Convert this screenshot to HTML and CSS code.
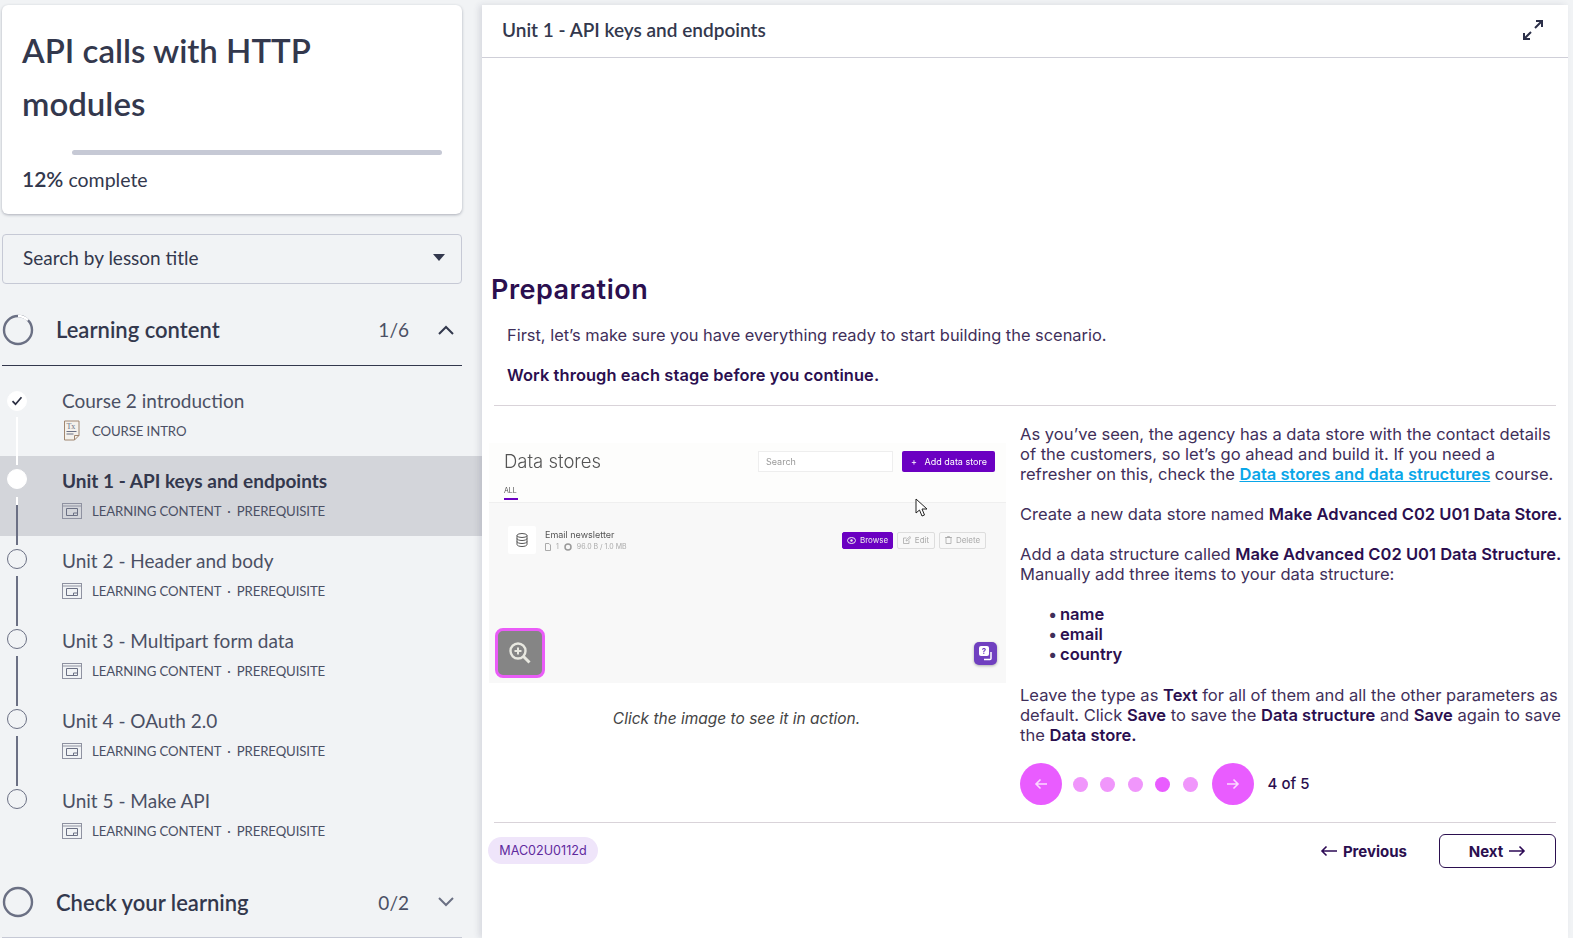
FILE: index.html
```html
<!DOCTYPE html>
<html lang="en">
<head>
    <meta charset="UTF-8">
    <meta name="viewport" content="width=device-width, initial-scale=1.0">
    <title>API calls with HTTP modules</title>
    <link rel="stylesheet" href="styles.css">
</head>
<body>
    <aside class="sidebar">
        <div class="course-card">
            <h1>API calls with HTTP modules</h1>
            <div class="progress-track"><div class="progress-done"></div><div class="progress-rest"></div></div>
            <p class="progress-text"><strong>12%</strong> complete</p>
        </div>
        <div class="lesson-search">
            <span>Search by lesson title</span>
            <span class="caret"></span>
        </div>

        <div class="section-head open">
            <svg class="section-ring" width="32" height="32" viewBox="0 0 32 32"><circle cx="16" cy="16" r="14" fill="none" stroke="#6b7084" stroke-width="2.4"/><path d="M16 2a14 14 0 0 1 10 4.2" fill="none" stroke="#fff" stroke-width="2.4"/></svg>
            <span class="section-title">Learning content</span>
            <span class="section-count">1/6</span>
            <svg class="chevron" width="18" height="12" viewBox="0 0 18 12"><path d="M2 10l7-7 7 7" fill="none" stroke="#33384d" stroke-width="2"/></svg>
        </div>

        <ul class="lessons">
            <li class="lesson done">
                <div class="marker">
                    <span class="dot"><svg width="12" height="10" viewBox="0 0 12 10"><path d="M1.5 5.2l3 3 6-7" fill="none" stroke="#2b2f42" stroke-width="1.7"/></svg></span>
                    <span class="line"></span>
                </div>
                <div class="lesson-body">
                    <div class="lesson-title">Course 2 introduction</div>
                    <div class="lesson-meta">
                        <svg class="intro-icon" width="16" height="21" viewBox="0 0 16 21"><path d="M.5 1h14.500v14.500l-4.500 4.500h-10z" fill="#f4f1ec" stroke="#a08670"/><path d="M10.500 20v-4.500h4.500" fill="none" stroke="#a08670"/><text x="2.500" y="9" class="intro-tx">Tx</text><path d="M2.500 11.500h10M2.500 14h7" stroke="#6b7084"/></svg>
                        <span>COURSE INTRO</span>
                    </div>
                </div>
            </li>
            <li class="lesson current">
                <div class="marker">
                    <span class="dot"></span>
                    <span class="line"></span>
                </div>
                <div class="lesson-body">
                    <div class="lesson-title">Unit 1 - API keys and endpoints</div>
                    <div class="lesson-meta">
                        <svg width="20" height="16" viewBox="0 0 20 16"><rect x=".5" y=".5" width="19" height="15" fill="none" stroke="#8f92a1"/><path d="M.5 3h19" stroke="#8f92a1"/><path d="M4.500 5.500h11v7h-11z" fill="none" stroke="#6b7084"/><path d="M11.500 12.500v-2.500h4" fill="none" stroke="#6b7084"/></svg>
                        <span>LEARNING CONTENT</span><span class="sep">·</span><span>PREREQUISITE</span>
                    </div>
                </div>
            </li>
            <li class="lesson">
                <div class="marker"><span class="dot"></span><span class="line"></span></div>
                <div class="lesson-body">
                    <div class="lesson-title">Unit 2 - Header and body</div>
                    <div class="lesson-meta">
                        <svg width="20" height="16" viewBox="0 0 20 16"><rect x=".5" y=".5" width="19" height="15" fill="none" stroke="#8f92a1"/><path d="M.5 3h19" stroke="#8f92a1"/><path d="M4.500 5.500h11v7h-11z" fill="none" stroke="#6b7084"/><path d="M11.500 12.500v-2.500h4" fill="none" stroke="#6b7084"/></svg>
                        <span>LEARNING CONTENT</span><span class="sep">·</span><span>PREREQUISITE</span>
                    </div>
                </div>
            </li>
            <li class="lesson">
                <div class="marker"><span class="dot"></span><span class="line"></span></div>
                <div class="lesson-body">
                    <div class="lesson-title">Unit 3 - Multipart form data</div>
                    <div class="lesson-meta">
                        <svg width="20" height="16" viewBox="0 0 20 16"><rect x=".5" y=".5" width="19" height="15" fill="none" stroke="#8f92a1"/><path d="M.5 3h19" stroke="#8f92a1"/><path d="M4.500 5.500h11v7h-11z" fill="none" stroke="#6b7084"/><path d="M11.500 12.500v-2.500h4" fill="none" stroke="#6b7084"/></svg>
                        <span>LEARNING CONTENT</span><span class="sep">·</span><span>PREREQUISITE</span>
                    </div>
                </div>
            </li>
            <li class="lesson">
                <div class="marker"><span class="dot"></span><span class="line"></span></div>
                <div class="lesson-body">
                    <div class="lesson-title">Unit 4 - OAuth 2.0</div>
                    <div class="lesson-meta">
                        <svg width="20" height="16" viewBox="0 0 20 16"><rect x=".5" y=".5" width="19" height="15" fill="none" stroke="#8f92a1"/><path d="M.5 3h19" stroke="#8f92a1"/><path d="M4.500 5.500h11v7h-11z" fill="none" stroke="#6b7084"/><path d="M11.500 12.500v-2.500h4" fill="none" stroke="#6b7084"/></svg>
                        <span>LEARNING CONTENT</span><span class="sep">·</span><span>PREREQUISITE</span>
                    </div>
                </div>
            </li>
            <li class="lesson">
                <div class="marker"><span class="dot"></span></div>
                <div class="lesson-body">
                    <div class="lesson-title">Unit 5 - Make API</div>
                    <div class="lesson-meta">
                        <svg width="20" height="16" viewBox="0 0 20 16"><rect x=".5" y=".5" width="19" height="15" fill="none" stroke="#8f92a1"/><path d="M.5 3h19" stroke="#8f92a1"/><path d="M4.500 5.500h11v7h-11z" fill="none" stroke="#6b7084"/><path d="M11.500 12.500v-2.500h4" fill="none" stroke="#6b7084"/></svg>
                        <span>LEARNING CONTENT</span><span class="sep">·</span><span>PREREQUISITE</span>
                    </div>
                </div>
            </li>
        </ul>

        <div class="section-head closed">
            <svg class="section-ring" width="32" height="32" viewBox="0 0 32 32"><circle cx="16" cy="16" r="14" fill="none" stroke="#6b7084" stroke-width="2.4"/></svg>
            <span class="section-title">Check your learning</span>
            <span class="section-count">0/2</span>
            <svg class="chevron" width="18" height="12" viewBox="0 0 18 12"><path d="M2 2l7 7 7-7" fill="none" stroke="#6b7084" stroke-width="2"/></svg>
        </div>
    </aside>

    <main class="lesson-panel">
        <header class="panel-head">
            <span>Unit 1 - API keys and endpoints</span>
            <svg width="22" height="22" viewBox="0 0 22 22"><path d="M13 9l7-7M14 2h6v6M9 13l-7 7M2 14v6h6" fill="none" stroke="#2b2f48" stroke-width="2"/></svg>
        </header>

        <div class="panel-body">
            <h2>Preparation</h2>
            <p class="intro">First, let’s make sure you have everything ready to start building the scenario.</p>
            <p class="intro"><strong>Work through each stage before you continue.</strong></p>

            <div class="columns">
                <div class="media">
                    <div class="shot">
                        <div class="shot-inner">
                            <div class="shot-top">
                                <div class="shot-bar">
                                    <span class="shot-title">Data stores</span>
                                    <span class="shot-search">Search</span>
                                    <span class="shot-add">+&nbsp;&nbsp;&nbsp;Add data store</span>
                                </div>
                                <div class="shot-tab">ALL</div>
                            </div>
                            <div class="shot-row">
                                <span class="shot-icon">
                                    <svg width="12" height="14" viewBox="0 0 12 14"><ellipse cx="6" cy="2.500" rx="5" ry="2" fill="none" stroke="#555"/><path d="M1 2.500v9c0 1.100 2.200 2 5 2s5-.9 5-2v-9M1 5.500c0 1.100 2.200 2 5 2s5-.9 5-2M1 8.500c0 1.100 2.200 2 5 2s5-.9 5-2" fill="none" stroke="#555"/></svg>
                                </span>
                                <div class="shot-info">
                                    <div class="shot-name">Email newsletter</div>
                                    <div class="shot-size">
                                        <svg width="6" height="8" viewBox="0 0 6 8"><path d="M.5.500h3.500l1.500 1.500v5.500h-5z" fill="none" stroke="#aaa"/></svg>
                                        <span>1</span>
                                        <svg width="8" height="8" viewBox="0 0 8 8"><circle cx="4" cy="4" r="3" fill="none" stroke="#999" stroke-width="1.500"/></svg>
                                        <span>96.0 B / 1.0 MB</span>
                                    </div>
                                </div>
                                <span class="shot-btn browse">
                                    <svg width="9" height="7" viewBox="0 0 9 7"><ellipse cx="4.500" cy="3.500" rx="4" ry="3" fill="none" stroke="#eee"/><circle cx="4.500" cy="3.500" r="1.200" fill="#eee"/></svg>
                                    Browse
                                </span>
                                <span class="shot-btn edit">
                                    <svg width="8" height="8" viewBox="0 0 8 8"><path d="M6 4.500v3h-5.500v-5.500h3M3 5l.5-1.500 3.500-3 1 1-3.500 3z" fill="none" stroke="#aaa" stroke-width=".8"/></svg>
                                    Edit
                                </span>
                                <span class="shot-btn delete">
                                    <svg width="7" height="8" viewBox="0 0 7 8"><path d="M1 1.500h5v6h-5zM0 1.500h7M2.500 1.500v-1h2v1" fill="none" stroke="#aaa" stroke-width=".8"/></svg>
                                    Delete
                                </span>
                            </div>
                            <span class="shot-help">
                                <span class="shot-help-mark">?</span>
                                <svg width="14" height="14" viewBox="0 0 14 14"><path d="M12 5v6.500a1 1 0 0 1-1 1H5" fill="none" stroke="#fff" stroke-width="1.500"/></svg>
                            </span>
                            <svg class="shot-cursor" width="14" height="20" viewBox="0 0 14 20"><path d="M1 1v14l3.500-3 2.500 6 2.500-1-2.500-6h5z" fill="#fff" stroke="#222"/></svg>
                        </div>
                        <span class="zoom-btn">
                            <svg width="26" height="26" viewBox="0 0 26 26"><circle cx="11" cy="11" r="7.500" fill="none" stroke="#e8e8e0" stroke-width="2.400"/><path d="M16.500 16.500l6 6" stroke="#e8e8e0" stroke-width="3"/><path d="M7.500 11h7M11 7.500v7" stroke="#e8e8e0" stroke-width="2"/></svg>
                        </span>
                    </div>
                    <p class="caption">Click the image to see it in action.</p>
                </div>

                <div class="steps">
                    <p>As you’ve seen, the agency has a data store with the contact details of the customers, so let’s go ahead and build it. If you need a refresher on this, check the <a href="#">Data stores and data structures</a> course.</p>
                    <p>Create a new data store named <strong>Make Advanced C02 U01 Data Store.</strong></p>
                    <p>Add a data structure called <strong>Make Advanced C02 U01 Data Structure.</strong> Manually add three items to your data structure:</p>
                    <ul>
                        <li><strong>name</strong></li>
                        <li><strong>email</strong></li>
                        <li><strong>country</strong></li>
                    </ul>
                    <p>Leave the type as <strong>Text</strong> for all of them and all the other parameters as default. Click <strong>Save</strong> to save the <strong>Data structure</strong> and <strong>Save</strong> again to save the <strong>Data store.</strong></p>
                    <div class="pager">
                        <span class="pager-arrow"><svg width="14" height="12" viewBox="0 0 14 12"><path d="M13 6H2M6.500 1.500L2 6l4.500 4.500" fill="none" stroke="#fbd9ff" stroke-width="1.600"/></svg></span>
                        <span class="pager-dot"></span>
                        <span class="pager-dot"></span>
                        <span class="pager-dot"></span>
                        <span class="pager-dot on"></span>
                        <span class="pager-dot"></span>
                        <span class="pager-arrow"><svg width="14" height="12" viewBox="0 0 14 12"><path d="M1 6h11M7.500 1.500L12 6l-4.500 4.500" fill="none" stroke="#fbd9ff" stroke-width="1.600"/></svg></span>
                        <span class="pager-text">4 of 5</span>
                    </div>
                </div>
            </div>

            <footer class="panel-foot">
                <span class="lesson-code">MAC02U0112d</span>
                <a class="prev" href="#">
                    <svg width="18" height="12" viewBox="0 0 18 12"><path d="M17 6H2M6.500 1.500L2 6l4.500 4.500" fill="none" stroke="#2d0a55" stroke-width="1.600"/></svg>
                    Previous
                </a>
                <a class="next" href="#">
                    Next
                    <svg width="18" height="12" viewBox="0 0 18 12"><path d="M1 6h15M11.500 1.500L16 6l-4.500 4.500" fill="none" stroke="#2d0a55" stroke-width="1.600"/></svg>
                </a>
            </footer>
        </div>
    </main>
</body>
</html>
```

FILE: styles.css
```css
* {
    box-sizing: border-box;
}
body {
    margin: 0;
    height: 100vh;
    overflow: hidden;
    display: flex;
    background: #f1f3f5;
    font-family: Lato, "Noto Sans", sans-serif;
    color: #33384d;
}

/* sidebar */
.sidebar {
    width: 482px;
    flex-shrink: 0;
    padding-top: 5px;
}
.course-card {
    width: 460px;
    height: 209px;
    margin-left: 2px;
    padding: 19px 20px 0;
    background: white;
    border-radius: 6px;
    box-shadow: 0 1px 3px rgba(40, 45, 70, 0.35);
}
.course-card h1 {
    max-width: 330px;
    margin: 0;
    font-size: 33px;
    line-height: 53px;
    font-weight: 600;
    color: #33384d;
}
.progress-track {
    display: flex;
    margin-top: 20px;
    height: 5px;
}
.progress-done {
    width: 50px;
    background: white;
}
.progress-rest {
    flex: 1;
    background: #c6c9d5;
    border-radius: 3px;
}
.progress-text {
    margin: 11px 0 0;
    font-size: 19.5px;
    line-height: 26px;
}
.progress-text strong {
    font-size: 21px;
    font-weight: 600;
    color: #33384d;
}
.lesson-search {
    display: flex;
    justify-content: space-between;
    align-items: center;
    width: 460px;
    height: 50px;
    margin: 20px 0 0 2px;
    padding: 0 16px 3px 20px;
    border: 1px solid #c6c9d5;
    border-radius: 4px;
    font-size: 19px;
}
.caret {
    border-left: 6px solid transparent;
    border-right: 6px solid transparent;
    border-top: 7px solid #33384d;
}
.section-head {
    display: flex;
    align-items: center;
    width: 460px;
    margin-left: 2px;
    font-size: 22px;
}
.section-head.open {
    height: 82px;
    padding-top: 10px;
    border-bottom: 1px solid #33384d;
}
.section-head.closed {
    height: 71px;
    margin-top: 11px;
    border-bottom: 1px solid #c6c9d5;
}
.section-title {
    flex: 1;
    margin-left: 22px;
    font-weight: 600;
}
.section-count {
    margin-right: 28px;
    color: #4b5064;
    font-size: 19px;
}
.chevron {
    margin-right: 7px;
}
.lessons {
    list-style: none;
    margin: 10px 0 0;
    padding: 0;
}
.lesson {
    display: flex;
    height: 80px;
    color: #4b5064;
}
.lesson.current {
    background: #d3d5da;
    color: #33384d;
}
.marker {
    width: 62px;
    flex-shrink: 0;
    padding: 13px 0 0 7px;
}
.done .marker {
    padding-top: 15px;
}
.dot {
    display: flex;
    align-items: center;
    justify-content: center;
    width: 20px;
    height: 20px;
    border: 1px solid #6b7084;
    border-radius: 50%;
}
.line {
    display: block;
    width: 2px;
    height: 50px;
    margin: 7px 0 0 9px;
    background: #6b7084;
}
.done .dot,
.current .dot {
    background: white;
    border-color: white;
}
.done .line {
    height: 48px;
    margin-top: 6px;
    background: white;
}
.current .line {
    height: 48px;
    margin-top: 8px;
    background: linear-gradient(to bottom, white 8px, #6b7084 8px);
}
.lesson-body {
    padding-top: 12px;
}
.lesson-title {
    font-size: 19px;
    line-height: 26px;
}
.current .lesson-title {
    font-weight: 700;
}
.lesson-meta {
    display: flex;
    align-items: center;
    gap: 10px;
    margin-top: 7px;
    font-size: 13.2px;
    letter-spacing: -0.1px;
    line-height: 20px;
    color: #4b5064;
}
.done .lesson-meta {
    margin-top: 6px;
}
.lesson-meta .sep {
    margin: 0 -4px;
}
.intro-icon {
    margin-left: 2px;
    margin-right: 2px;
}
.intro-tx {
    font-family: "Liberation Serif", serif;
    font-size: 8px;
    fill: #6b7084;
}

/* main panel */
.lesson-panel {
    width: 1086px;
    height: 933px;
    margin-top: 5px;
    background: white;
    box-shadow: -3px 0 6px rgba(40, 45, 70, 0.12);
    font-family: Inter, "Liberation Sans", sans-serif;
    color: #3f2f5a;
}
.panel-head {
    display: flex;
    align-items: center;
    justify-content: space-between;
    height: 53px;
    padding: 0 24px 3px 20px;
    border-bottom: 1px solid #cfcfd8;
    font-family: Lato, "Noto Sans", sans-serif;
    font-size: 19px;
    font-weight: 600;
    color: #33384d;
}
.panel-body {
    padding: 215px 0 0 9px;
}
.panel-body h2 {
    margin: 0;
    font-size: 27px;
    line-height: 34px;
    font-weight: 600;
    color: #2b0f4f;
    letter-spacing: 0.5px;
}
.intro {
    margin: 16px 0 0 16px;
    font-size: 16.4px;
    line-height: 24px;
}
.intro + .intro {
    margin-top: 16px;
}
.intro strong {
    letter-spacing: 0.1px;
}
strong {
    font-weight: 600;
    color: #2b0f4f;
}
.columns {
    display: flex;
    width: 1062px;
    margin: 18px 0 0 3px;
    border-top: 1px solid #d9d3d9;
    border-bottom: 1px solid #d9d3d9;
}
.media {
    flex-shrink: 0;
    width: 520px;
    margin-left: -5px;
    padding: 37px 25px 0 0;
}
.shot {
    position: relative;
    width: 517px;
    height: 240px;
}
.shot-inner {
    position: relative;
    height: 100%;
    background: #f8f8f8;
    color: #555;
    filter: blur(0.4px);
    overflow: hidden;
}
.shot-top {
    height: 60px;
    padding: 7px 11px 0 15px;
    background: #fdfdfc;
    border-bottom: 1px solid #efefef;
}
.shot-bar {
    display: flex;
    align-items: center;
}
.shot-title {
    width: 254px;
    font-size: 18.5px;
    font-weight: 300;
}
.shot-search {
    width: 135px;
    height: 21px;
    margin-right: 9px;
    padding-left: 7px;
    border: 1px solid #eee;
    background: white;
    font-size: 9px;
    line-height: 19px;
    color: #999;
}
.shot-add {
    width: 93px;
    height: 21px;
    padding-left: 9px;
    background: #6b00c2;
    color: white;
    font-size: 9px;
    line-height: 21px;
    white-space: nowrap;
    border-radius: 2px;
}
.shot-tab {
    width: 14px;
    margin-top: 14px;
    padding-bottom: 3px;
    border-bottom: 2px solid #6b00c2;
    font-size: 7px;
    line-height: 9px;
}
.shot-row {
    display: flex;
    align-items: center;
    gap: 4px;
    padding: 23px 20px 0 19px;
}
.shot-icon {
    display: flex;
    align-items: center;
    justify-content: center;
    width: 28px;
    height: 28px;
    margin-right: 5px;
    background: white;
    border-radius: 2px;
}
.shot-info {
    flex: 1;
}
.shot-name {
    font-size: 9px;
    line-height: 13px;
}
.shot-size {
    display: flex;
    align-items: center;
    gap: 5px;
    font-size: 7px;
    line-height: 11px;
    color: #aaa;
}
.shot-btn {
    display: flex;
    align-items: center;
    justify-content: center;
    gap: 4px;
    height: 17px;
    border: 1px solid #ddd;
    border-radius: 2px;
    font-size: 8px;
    color: #aaa;
}
.shot-btn.browse {
    width: 51px;
    background: #6b00c2;
    border-color: #6b00c2;
    color: #eee;
}
.shot-btn.edit {
    width: 38px;
}
.shot-btn.delete {
    width: 47px;
}
.shot-help {
    position: absolute;
    right: 9px;
    bottom: 18px;
    display: flex;
    align-items: center;
    justify-content: center;
    width: 23px;
    height: 23px;
    background: #7040c0;
    border-radius: 5px;
    box-shadow: 0 1px 3px rgba(0, 0, 0, 0.3);
}
.shot-help-mark {
    position: absolute;
    left: 5px;
    top: 4px;
    width: 10px;
    height: 10px;
    background: white;
    border-radius: 2px;
    color: #7040c0;
    font-size: 8px;
    font-weight: 700;
    line-height: 10px;
    text-align: center;
}
.shot-cursor {
    position: absolute;
    left: 426px;
    top: 55px;
}
.zoom-btn {
    position: absolute;
    left: 6px;
    top: 185px;
    display: flex;
    align-items: center;
    justify-content: center;
    width: 50px;
    height: 50px;
    background: #858585;
    border: 3px solid #ea5cf8;
    border-radius: 8px;
}
.caption {
    margin: 26px 0 0;
    font-size: 15.5px;
    line-height: 20px;
    font-style: italic;
    text-align: center;
    color: #444;
}
.steps {
    flex-shrink: 0;
    width: 548px;
    padding: 18px 0 17px;
    margin-left: 11px;
    font-size: 16.55px;
    line-height: 20px;
}
.steps p {
    margin: 0 0 20px;
}
.steps a {
    color: #0aa6e8;
    font-weight: 600;
}
.steps ul {
    list-style: none;
    margin: 0 0 21px;
    padding-left: 40px;
}
.steps li::before {
    content: "•";
    display: inline-block;
    width: 12px;
    margin-left: -12px;
}
.pager {
    display: flex;
    align-items: center;
    margin-top: -2px;
}
.pager-arrow {
    display: flex;
    align-items: center;
    justify-content: center;
    width: 42px;
    height: 42px;
    background: #e95cff;
    border-radius: 50%;
}
.pager-dot {
    width: 15px;
    height: 15px;
    margin-left: 12.4px;
    background: #f096fb;
    border-radius: 50%;
}
.pager-dot:nth-child(2) {
    margin-left: 11px;
}
.pager-dot.on {
    background: #e95cff;
}
.pager-arrow:nth-child(7) {
    margin-left: 14px;
}
.pager-text {
    margin-left: 14px;
    font-size: 15px;
    font-weight: 500;
    color: #2b0f4f;
}
.panel-foot {
    display: flex;
    align-items: center;
    width: 1068px;
    margin-top: 9px;
    margin-left: -3px;
}
.lesson-code {
    width: 110px;
    height: 27px;
    background: #efe5fa;
    border-radius: 14px;
    font-size: 12.6px;
    line-height: 27px;
    text-align: center;
    color: #5f2a9e;
    margin-right: auto;
}
.prev,
.next {
    display: flex;
    align-items: center;
    justify-content: center;
    gap: 5px;
    margin-top: 2px;
    font-size: 15px;
    font-weight: 700;
    color: #2b0f4f;
    text-decoration: none;
}
.next {
    width: 117px;
    height: 34px;
    margin-left: 32px;
    border: 1.5px solid #2b0f4f;
    border-radius: 6px;
}
```
